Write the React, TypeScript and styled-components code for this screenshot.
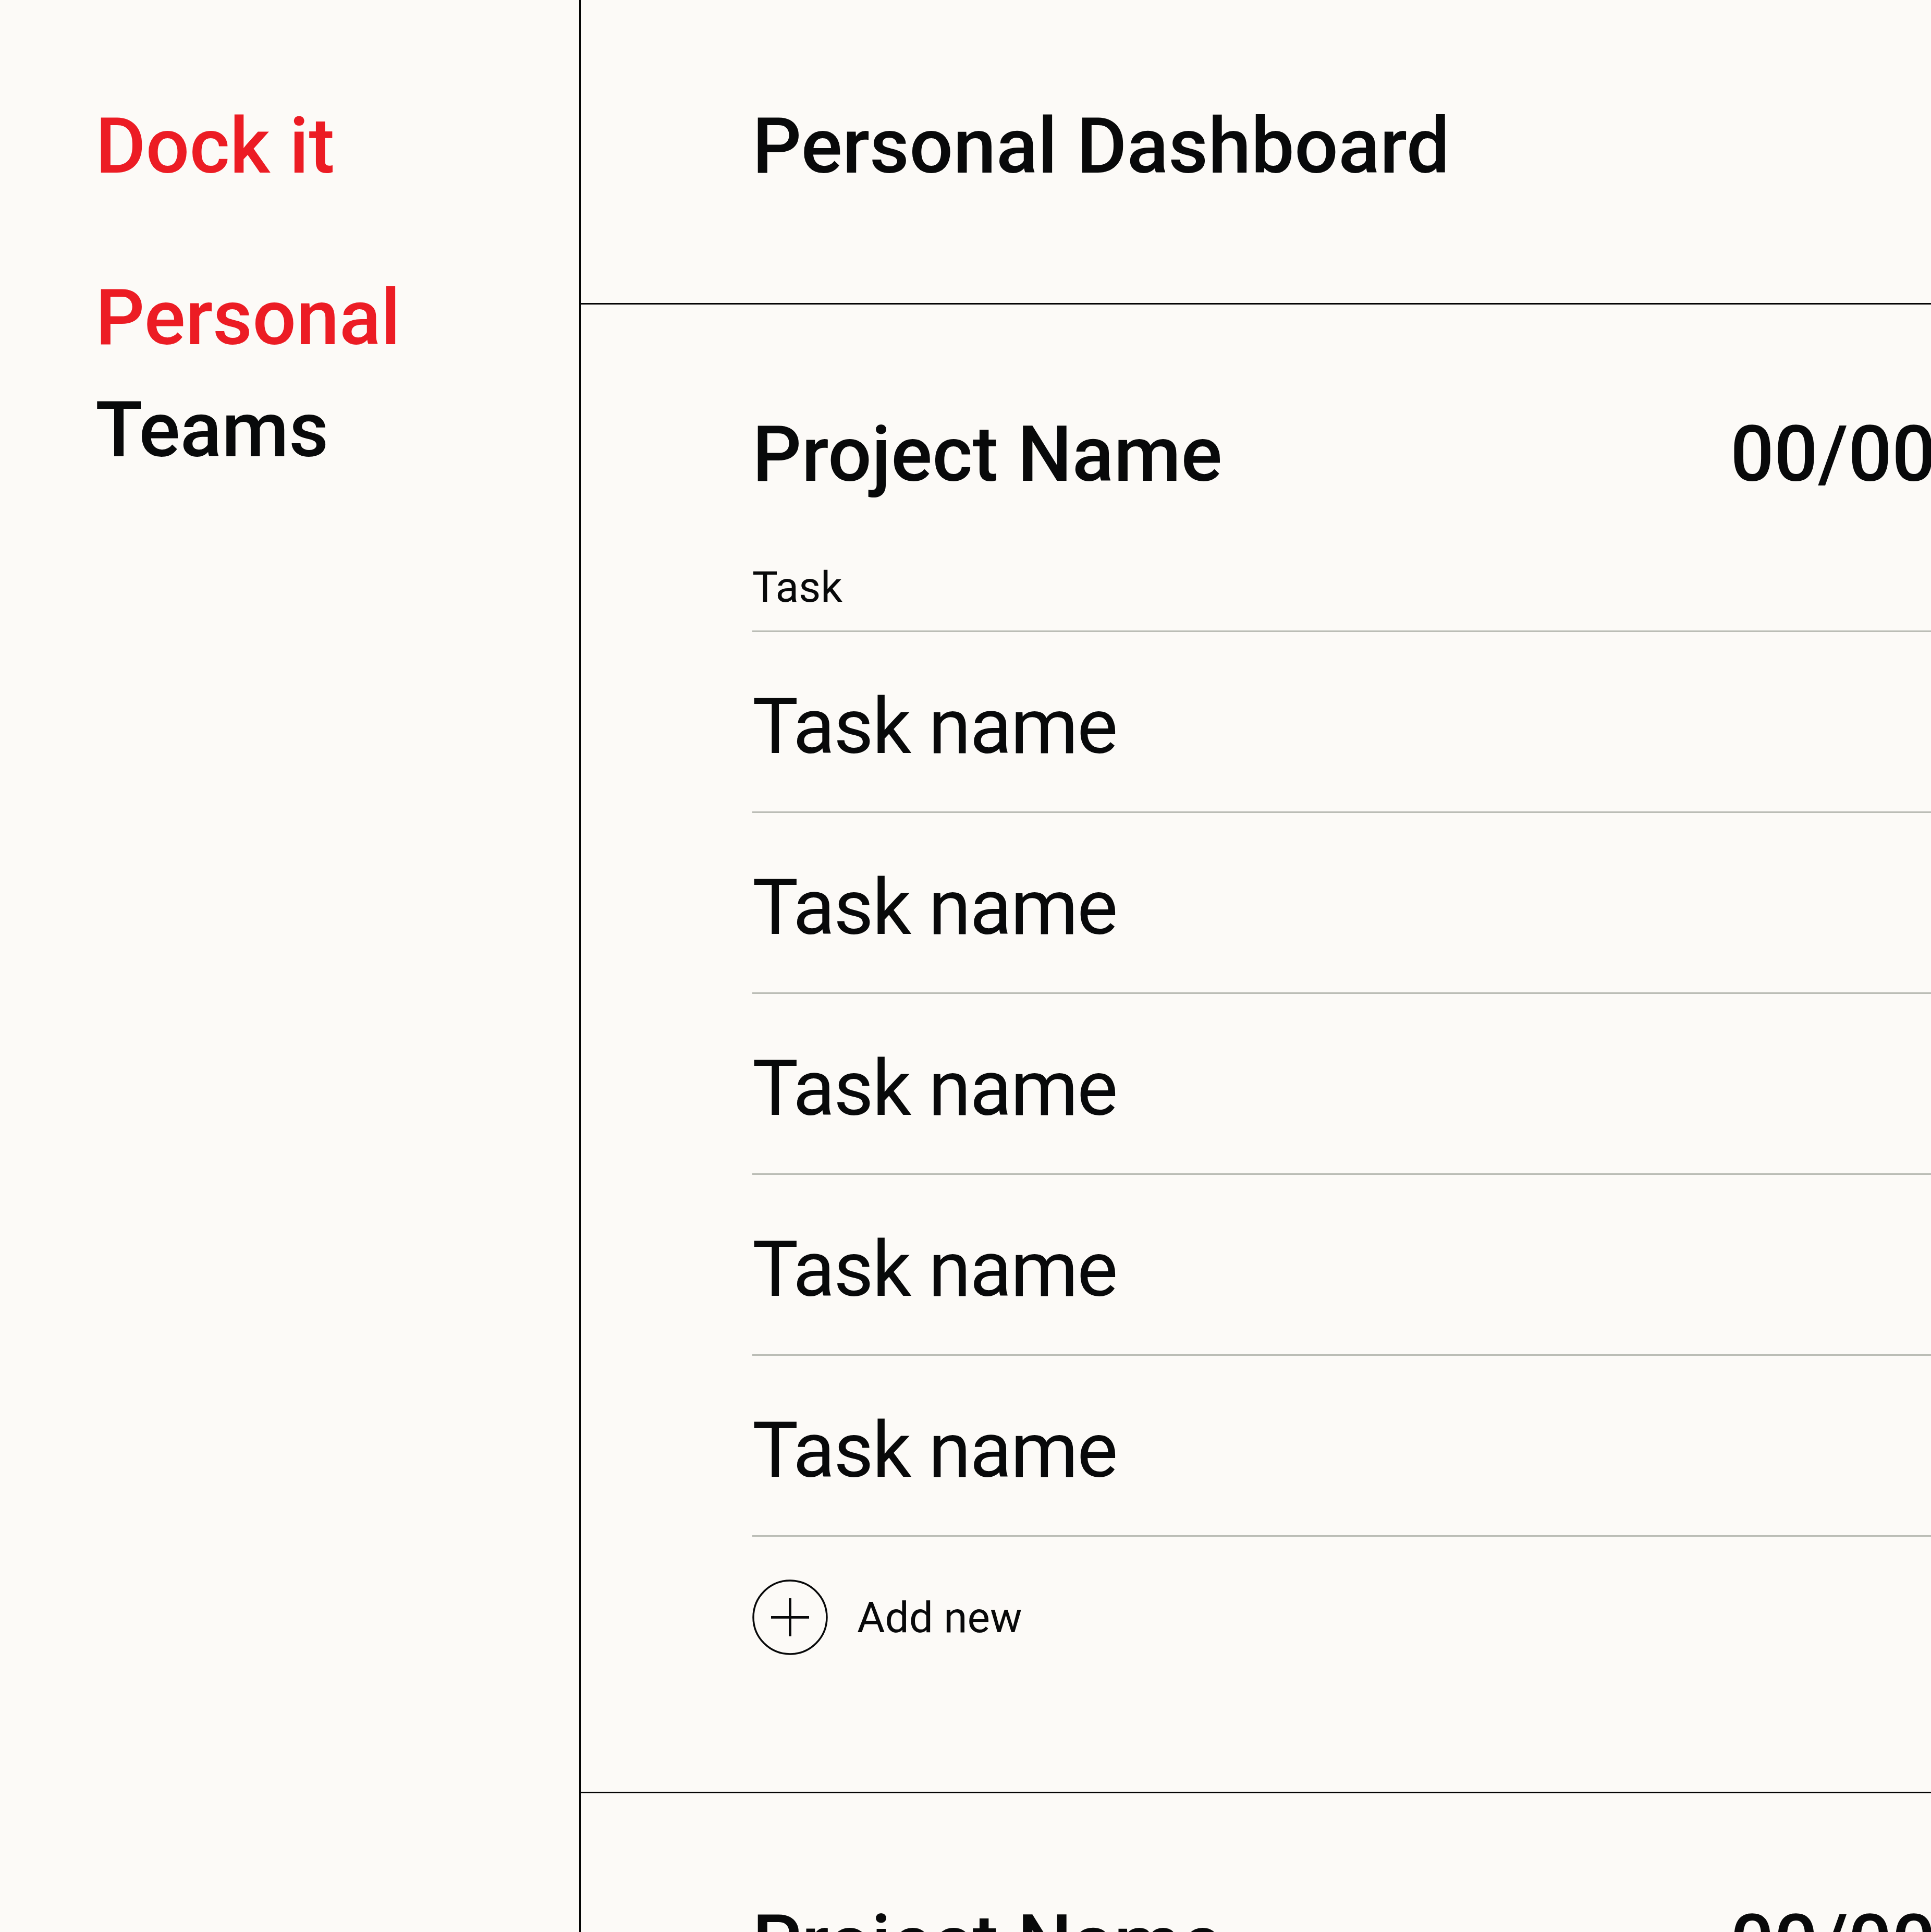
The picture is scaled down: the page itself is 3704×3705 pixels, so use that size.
import React from "react";
import styled, { createGlobalStyle } from "styled-components";

const Global = createGlobalStyle`
  html, body {
    margin: 0;
    padding: 0;
    background: #fcfaf7;
    overflow: hidden;
  }
  * { box-sizing: border-box; }
`;

const FONT = `Roboto, "Liberation Sans", Arial, sans-serif`;

const Page = styled.div`
  display: grid;
  grid-template-columns: 1114px 1fr;
  height: 3705px;
  background: #fcfaf7;
  font-family: ${FONT};
  color: #08090a;
  overflow: hidden;
`;

const Sidebar = styled.aside`
  border-right: 3px solid #050505;
  padding: 207px 0 0 183px;
  display: flex;
  flex-direction: column;
`;

const Logo = styled.div`
  font-size: 148px;
  line-height: 1;
  font-weight: 500;
  color: #ec1c24;
  margin-bottom: 181px;
`;

const Nav = styled.nav`
  display: flex;
  flex-direction: column;
  gap: 67px;
`;

const NavItem = styled.a<{ $active?: boolean }>`
  font-size: 148px;
  line-height: 1;
  font-weight: 500;
  color: ${(p) => (p.$active ? "#ec1c24" : "#08090a")};
  text-decoration: none;
`;

const Main = styled.main`
  display: flex;
  flex-direction: column;
  min-width: 0;
  overflow: hidden;
`;

const Header = styled.header`
  height: 584px;
  flex-shrink: 0;
  border-bottom: 3px solid #050505;
  padding: 207px 0 0 329px;
`;

const Title = styled.h1`
  margin: 0;
  font-size: 148px;
  line-height: 1;
  font-weight: 500;
  white-space: nowrap;
`;

const Section = styled.section`
  flex-shrink: 0;
  border-bottom: 3px solid #050505;
  padding: 214px 0 262px 329px;
`;

const ProjectHeader = styled.div`
  display: grid;
  grid-template-columns: 1876px auto;
  align-items: start;
  margin-bottom: 139px;
`;

const ProjectName = styled.h2`
  margin: 0;
  font-size: 148px;
  line-height: 1;
  font-weight: 500;
  white-space: nowrap;
`;

const DueDate = styled.div`
  font-size: 148px;
  line-height: 1;
  font-weight: 500;
  white-space: nowrap;
`;

const ColumnLabel = styled.div`
  font-size: 82px;
  line-height: 1;
  font-weight: 400;
  padding-bottom: 42px;
  border-bottom: 3px solid #bbbdb6;
`;

const TaskRow = styled.div`
  font-size: 148px;
  line-height: 1;
  font-weight: 400;
  letter-spacing: -0.015em;
  padding: 108px 0 88px;
  border-bottom: 3px solid #bbbdb6;
  white-space: nowrap;
`;

const AddButton = styled.button`
  display: flex;
  align-items: center;
  gap: 56px;
  margin-top: 82px;
  padding: 0;
  border: 0;
  background: none;
  font-family: ${FONT};
  font-size: 82px;
  line-height: 1;
  font-weight: 400;
  color: #08090a;
  cursor: pointer;
`;

const PlusIcon = () => (
  <svg width="145" height="145" viewBox="0 0 145 145" fill="none">
    <circle cx="72.5" cy="72.5" r="70.5" stroke="#08090a" strokeWidth="3.5" />
    <line x1="36" y1="72.5" x2="109" y2="72.5" stroke="#08090a" strokeWidth="5" />
    <line x1="72.5" y1="36" x2="72.5" y2="109" stroke="#08090a" strokeWidth="5" />
  </svg>
);

const tasks = ["Task name", "Task name", "Task name", "Task name", "Task name"];

const Project = () => (
  <Section>
    <ProjectHeader>
      <ProjectName>Project Name</ProjectName>
      <DueDate>00/00</DueDate>
    </ProjectHeader>
    <ColumnLabel>Task</ColumnLabel>
    {tasks.map((t, i) => (
      <TaskRow key={i}>{t}</TaskRow>
    ))}
    <AddButton>
      <PlusIcon />
      Add new
    </AddButton>
  </Section>
);

export default function App() {
  return (
    <>
      <Global />
      <Page>
        <Sidebar>
          <Logo>Dock it</Logo>
          <Nav>
            <NavItem $active href="#">Personal</NavItem>
            <NavItem href="#">Teams</NavItem>
          </Nav>
        </Sidebar>
        <Main>
          <Header>
            <Title>Personal Dashboard</Title>
          </Header>
          <Project />
          <Project />
        </Main>
      </Page>
    </>
  );
}
